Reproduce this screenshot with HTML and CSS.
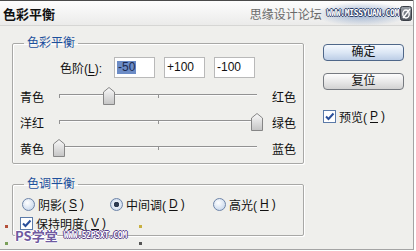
FILE: index.html
```html
<!DOCTYPE html>
<html lang="zh">

<head>
    <meta charset="UTF-8" />
    <meta name="viewport" content="width=device-width, initial-scale=1.0" />
    <link rel="stylesheet" href="styles.css">
</head>

<body>
    <div class="dialog">
        <div class="titlebar">
            <span class="title">色彩平衡</span>
            <span class="brand">思缘设计论坛</span>
            <span class="brand-url">WWW.MISSYUAN.COM</span>
            <svg class="brand-icon" width="12" height="15" viewBox="0 0 12 15">
                <defs>
                    <linearGradient id="ig" x1="0" y1="0" x2="0" y2="1">
                        <stop offset="0" stop-color="#9aa0a8" />
                        <stop offset="1" stop-color="#4e545c" />
                    </linearGradient>
                </defs>
                <rect x="0.5" y="0.5" width="11" height="14" rx="2" fill="url(#ig)" stroke="#3a3f46" />
                <ellipse cx="6" cy="8" rx="3.2" ry="4" fill="none" stroke="#fff" stroke-width="1.4" />
                <path d="M3 12 L10 3" stroke="#fff" stroke-width="1.4" />
            </svg>
        </div>

        <div class="body">
            <div class="left">
                <fieldset class="group balance">
                    <legend>色彩平衡</legend>
                    <div class="levels">
                        <span class="levels-label">色阶(<u>L</u>):</span>
                        <div class="field"><span class="sel">-50</span></div>
                        <div class="field">+100</div>
                        <div class="field">-100</div>
                    </div>
                    <div class="slider-row">
                        <span>青色</span>
                        <div class="track"><span class="thumb" style="left: 44px"></span></div>
                        <span class="end">红色</span>
                    </div>
                    <div class="slider-row">
                        <span>洋红</span>
                        <div class="track"><span class="thumb" style="left: 192px"></span></div>
                        <span class="end">绿色</span>
                    </div>
                    <div class="slider-row">
                        <span>黄色</span>
                        <div class="track"><span class="thumb" style="left: -6px"></span></div>
                        <span class="end">蓝色</span>
                    </div>
                </fieldset>

                <fieldset class="group tone">
                    <legend>色调平衡</legend>
                    <div class="radios">
                        <span class="opt opt-1"><i class="radio"></i>阴影(<u>S</u>)</span>
                        <span class="opt opt-2"><i class="radio on"></i>中间调(<u>D</u>)</span>
                        <span class="opt"><i class="radio"></i>高光(<u>H</u>)</span>
                    </div>
                    <div class="opt keep"><i class="check"></i>保持明度(<u>V</u>)</div>
                </fieldset>
            </div>

            <div class="side">
                <div class="btn default">确定</div>
                <div class="btn">复位</div>
                <div class="opt preview"><i class="check"></i>预览(<u>P</u>)</div>
            </div>
        </div>

        <!-- 워터마크 -->
        <div class="watermark">
            <span class="wm-ps">PS学堂</span>
            <span class="wm-url">WWW.52PSXT.COM</span>
        </div>
    </div>
</body>

</html>
```

FILE: styles.css
```css
body {
    margin: 0;
    background: #fff;
}

.dialog {
    position: relative;
    width: 413px;
    height: 249px;
    border-right: 1px solid #a4a4a4;
    border-bottom: 1px solid #a4a4a4;
    background: #efefec;
    font: 12px "Liberation Sans", "Noto Sans CJK SC", sans-serif;
    color: #111;
    overflow: hidden;
}

.titlebar {
    display: flex;
    align-items: center;
    height: 24px;
    padding: 0 0 0 3px;
    border-top: 1px solid #4a4a4a;
    border-bottom: 1px solid #d6d6d4;
    background-image:
        radial-gradient(ellipse 48px 12px at 362px 13px, rgba(120, 150, 195, 0.75), rgba(120, 150, 195, 0) 100%),
        linear-gradient(#fdfdfd, #ebebea);
}

.title {
    font: bold 13px "Noto Sans CJK SC", sans-serif;
}

.brand {
    margin-left: auto;
    color: #6a6a6a;
    font-size: 12px;
}

.brand-url {
    margin-left: 5px;
    font: bold 8px "DejaVu Sans Mono", monospace;
    letter-spacing: -0.3px;
    color: #fff;
    text-shadow: 1px 0 #2d3e68, -1px 0 #2d3e68, 0 1px #2d3e68, 0 -1px #2d3e68;
}

.brand-icon {
    margin-left: 1px;
    margin-right: 1px;
}

.body {
    display: flex;
    padding: 9px 0 0 12px;
}

.left {
    width: 292px;
}

.group {
    margin: 0;
    padding: 0 7px;
    border: 1px solid #a8a8a6;
    box-shadow: inset 1px 1px #fff, 1px 1px #fff;
    border-radius: 2px;
}

.group legend {
    margin-left: 4px;
    padding: 0 3px;
    line-height: 16px;
    color: #1d4f9c;
}

.balance {
    padding-top: 6px;
    padding-bottom: 2px;
}

.levels {
    display: flex;
    align-items: center;
    padding-left: 40px;
}

.levels-label {
    width: 54px;
}

u {
    text-decoration-thickness: 1px;
    text-underline-offset: 2px;
}

.field {
    box-sizing: border-box;
    width: 41px;
    height: 21px;
    margin-right: 9px;
    padding: 0 2px;
    border: 1px solid #b9b9b9;
    background: #fff;
    line-height: 19px;
}

.sel {
    display: inline-block;
    padding: 0 1px;
    line-height: 13px;
    background: #6c8cc6;
    color: #1b2a50;
}

.slider-row {
    display: grid;
    grid-template-columns: 39px 198px max-content;
    align-items: center;
    height: 26px;
}

.levels + .slider-row {
    margin-top: 5px;
}

.end {
    margin-left: 15px;
}

.track {
    position: relative;
    height: 26px;
}

.track::before {
    content: "";
    position: absolute;
    left: 0;
    right: 0;
    top: 11px;
    height: 0;
    border-top: 1px solid #929292;
    border-bottom: 1px solid #fbfbfb;
}

.track::after {
    content: "";
    position: absolute;
    left: 0;
    top: 11px;
    width: 98px;
    height: 4px;
    border-left: 1px solid #929292;
    border-right: 1px solid #929292;
}

.thumb {
    position: absolute;
    top: 4px;
    width: 12px;
    height: 18px;
    background: url("data:image/svg+xml,%3Csvg xmlns='http://www.w3.org/2000/svg' width='12' height='18'%3E%3Cdefs%3E%3ClinearGradient id='g' x1='0' y1='0' x2='0' y2='1'%3E%3Cstop offset='0' stop-color='%23fafafa'/%3E%3Cstop offset='1' stop-color='%23c4c4c4'/%3E%3C/linearGradient%3E%3C/defs%3E%3Cpath d='M0.5 5 L6 0.5 L11.5 5 V17.5 H0.5 Z' fill='url(%23g)' stroke='%23868686'/%3E%3C/svg%3E");
    z-index: 1;
}

.tone {
    margin-top: 12px;
    padding-top: 4px;
    padding-bottom: 4px;
}

.radios {
    display: flex;
    height: 16px;
    padding-left: 2px;
}

.opt {
    display: flex;
    align-items: center;
    gap: 3px;
    height: 16px;
}

.opt-1 {
    width: 88px;
}

.opt-2 {
    width: 103px;
}

.keep {
    margin-top: 3px;
}

.radio {
    box-sizing: border-box;
    width: 13px;
    height: 13px;
    border: 1px solid #6d84a8;
    border-radius: 50%;
    background: radial-gradient(circle at 40% 35%, #ffffff, #c9d8ec 80%);
}

.radio.on {
    background: radial-gradient(circle, #2c3a52 0 2.5px, #e8eef8 3px, #c9d8ec 80%);
}

.check {
    box-sizing: border-box;
    width: 13px;
    height: 13px;
    border: 1px solid #5b7aa8;
    background: #fff url("data:image/svg+xml,%3Csvg xmlns='http://www.w3.org/2000/svg' width='11' height='11'%3E%3Cpath d='M2 5.5 L4.5 8 L9.5 2.5' fill='none' stroke='%232a4f9a' stroke-width='2'/%3E%3C/svg%3E") no-repeat center;
}

.side {
    display: flex;
    flex-direction: column;
    margin-left: 19px;
    padding-top: 9px;
}

.btn {
    box-sizing: border-box;
    width: 81px;
    height: 17px;
    margin-bottom: 12px;
    border: 1px solid #767a80;
    border-radius: 4px;
    background: linear-gradient(#fdfdfd, #e9e9e9 50%, #d2d2d2);
    text-align: center;
    line-height: 15px;
}

.btn.default {
    border-color: #4f6789;
    background: linear-gradient(#f5f9fe, #dce7f5 50%, #bccde6);
}

.preview {
    margin-top: 6px;
}

.watermark {
    position: absolute;
    left: 5px;
    top: 225px;
    display: flex;
    align-items: center;
    width: 137px;
    height: 20px;
    padding-left: 10px;
    box-sizing: border-box;
    background:
        linear-gradient(#b4503a, #b4503a) 0 0 / 3px 3px no-repeat,
        linear-gradient(#7aa05a, #7aa05a) 0 100% / 3px 3px no-repeat,
        linear-gradient(#c8b040, #c8b040) 100% 0 / 3px 3px no-repeat,
        linear-gradient(#555, #555) 100% 100% / 3px 3px no-repeat;
}

.wm-ps {
    font: bold 13px "Noto Sans CJK SC", sans-serif;
    color: #6f5aa0;
    text-shadow: 1px 0 #fff, -1px 0 #fff, 0 1px #fff, 0 -1px #fff;
}

.wm-url {
    margin-left: 6px;
    font: bold 8px "DejaVu Sans Mono", monospace;
    letter-spacing: -0.3px;
    color: #fff;
    text-shadow: 1px 0 #5a3f8a, -1px 0 #5a3f8a, 0 1px #5a3f8a, 0 -1px #5a3f8a;
}
```
